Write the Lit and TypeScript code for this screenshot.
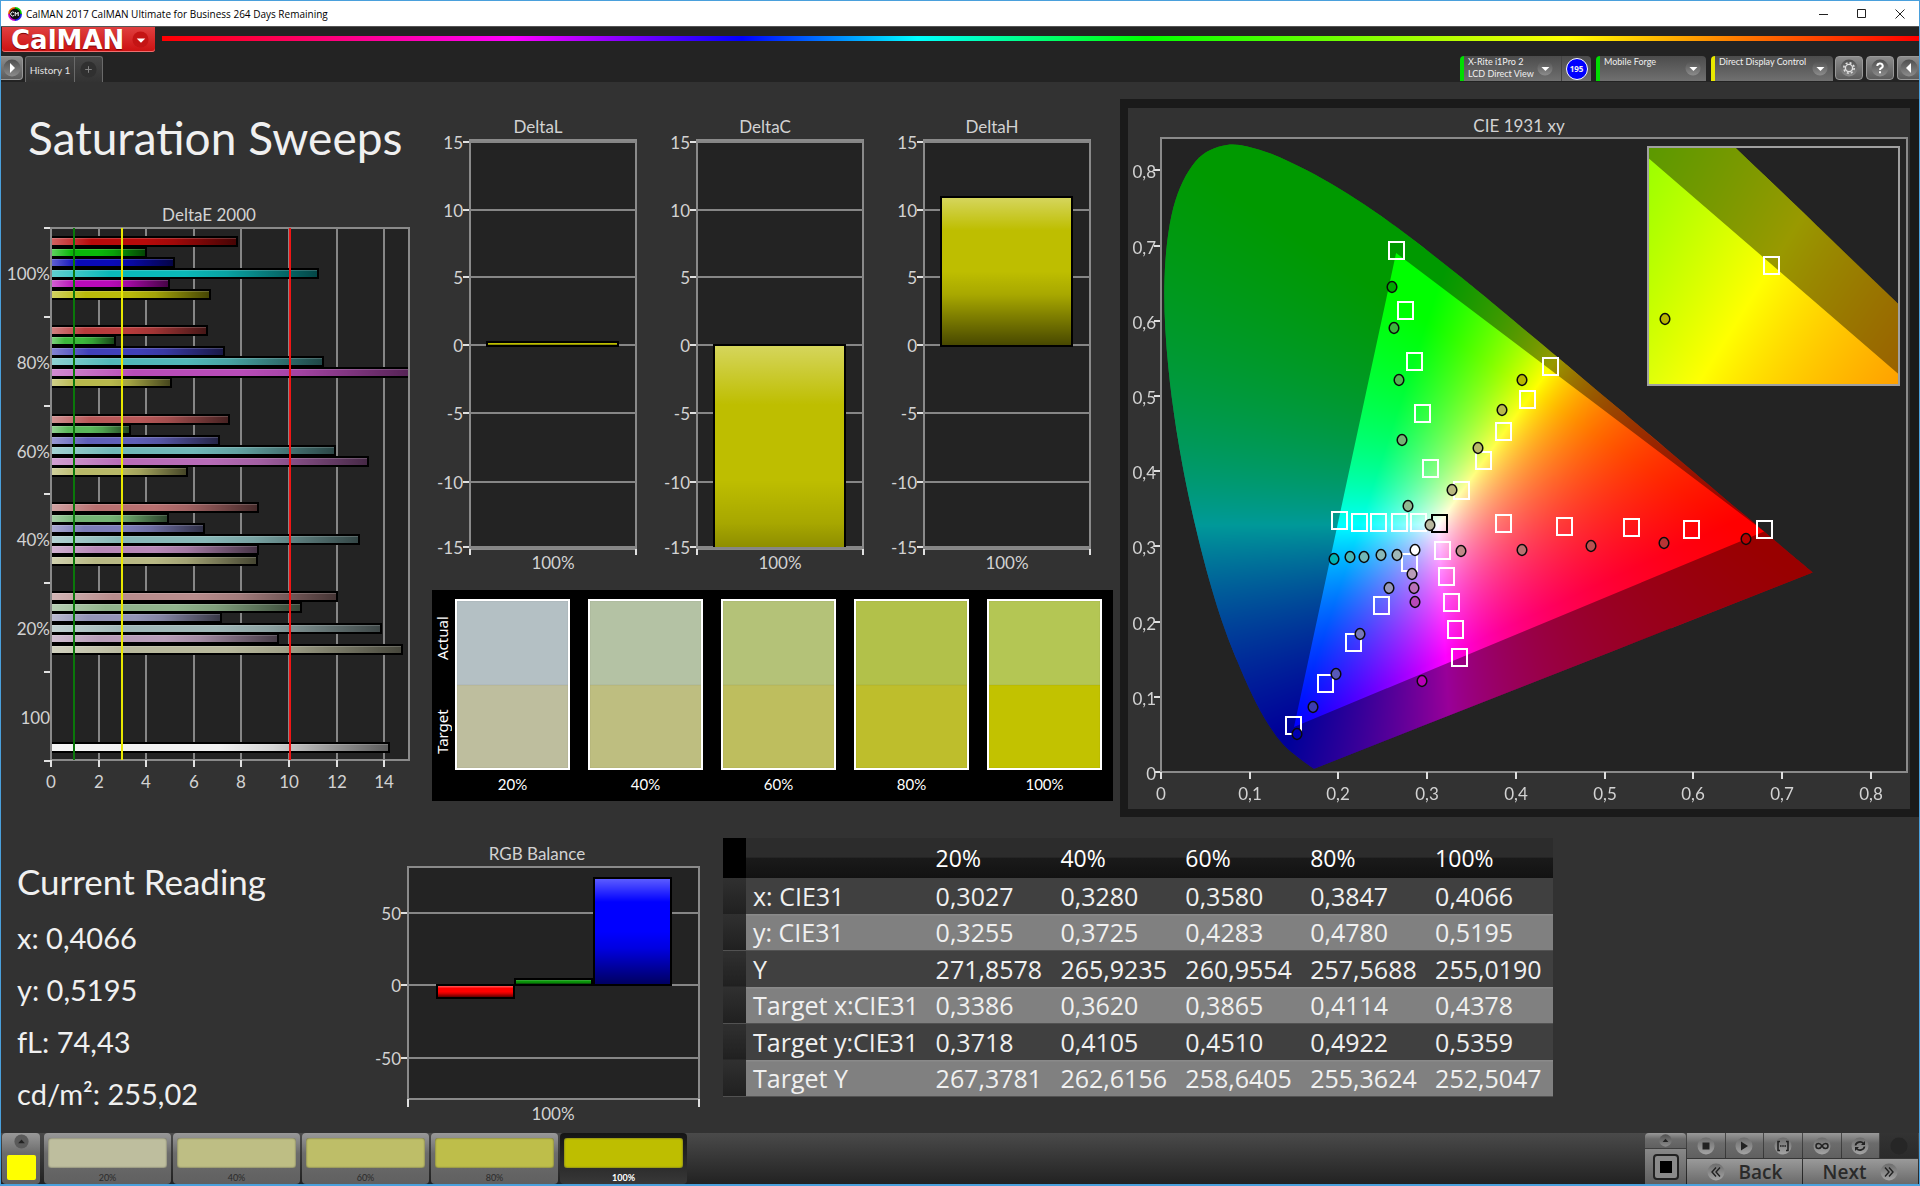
import { LitElement, html, svg, css } from "lit";
import { customElement } from "lit/decorators.js";

type Point = [number, number];

const LEVELS = ["20%", "40%", "60%", "80%", "100%"];

/* ---------- DeltaE 2000 data ---------- */
const DELTA_E: { label: string; bars: [number, string][] }[] = [
  { label: "100%", bars: [[7.86, "#b80a0a"], [4.04, "#0ab80a"], [5.23, "#0a0ab8"], [11.27, "#0ab8b8"], [5, "#b80ab8"], [6.72, "#b8b80a"]] },
  { label: "80%", bars: [[6.6, "#b83c3c"], [2.74, "#3cb83c"], [7.32, "#4040b8"], [11.45, "#50b8b8"], [16, "#b84cb8"], [5.08, "#b8b84c"]] },
  { label: "60%", bars: [[7.5, "#b85858"], [3.37, "#5ab85a"], [7.1, "#6060b8"], [11.98, "#70b8b8"], [13.37, "#b86cb8"], [5.75, "#b8b868"]] },
  { label: "40%", bars: [[8.75, "#b87070"], [4.94, "#74b474"], [6.46, "#7c7cb8"], [12.99, "#88b8b8"], [8.75, "#b888b8"], [8.7, "#b8b884"]] },
  { label: "20%", bars: [[12.05, "#b88c8c"], [10.55, "#90b48c"], [7.18, "#9494b8"], [13.9, "#a0b8b8"], [9.56, "#b89cb8"], [14.8, "#b8b89c"]] },
];

/* ---------- chromaticity data ---------- */
const LOCUS: Point[] = [
  [0.1741, 0.005], [0.1714, 0.0051], [0.1644, 0.0109], [0.1566, 0.0177], [0.144, 0.0297], [0.1355, 0.0399],
  [0.1241, 0.0578], [0.1096, 0.0868], [0.0913, 0.1327], [0.0687, 0.2007], [0.0454, 0.295], [0.0235, 0.4127],
  [0.0082, 0.5384], [0.0039, 0.6548], [0.0139, 0.7502], [0.0389, 0.812], [0.0743, 0.8338], [0.1142, 0.8262],
  [0.1547, 0.8059], [0.1929, 0.7816], [0.2296, 0.7543], [0.2658, 0.7243], [0.3016, 0.6923], [0.3373, 0.6589],
  [0.3731, 0.6245], [0.4441, 0.5547], [0.5125, 0.4866], [0.5752, 0.4242], [0.627, 0.3725], [0.6658, 0.334],
  [0.6915, 0.3083], [0.719, 0.2809], [0.7347, 0.2653],
];
const GAMUT: Point[] = [[0.68, 0.32], [0.265, 0.69], [0.15, 0.06]];

const TARGETS: Point[] = [
  [1396, 250], [1405, 310], [1414, 361], [1422, 413], [1430, 468],
  [1550, 366], [1527, 399], [1503, 431], [1483, 460], [1461, 490],
  [1339, 520], [1359, 522], [1378, 522], [1399, 522], [1418, 522],
  [1503, 523], [1564, 526], [1631, 527], [1691, 529], [1764, 529],
  [1442, 550], [1446, 576], [1451, 602], [1455, 629], [1459, 657],
  [1409, 562], [1381, 605], [1353, 642], [1325, 683], [1293, 725],
];
const READINGS: [number, number, string][] = [
  [1392, 287, "#00a800"], [1394, 328, "#3cb43c"], [1399, 380, "#54b454"], [1402, 440, "#74b474"], [1408, 506, "#90b890"],
  [1522, 380, "#b8b800"], [1502, 410, "#b8b84c"], [1478, 448, "#b8b868"], [1452, 490, "#b8b880"], [1430, 525, "#b8b8a0"],
  [1334, 559, "#00b4b4"], [1350, 557, "#48b8b8"], [1364, 557, "#70b8b8"], [1381, 555, "#88b8b8"], [1397, 555, "#a0b8b8"],
  [1415, 550, "#ffffff"],
  [1461, 551, "#c08888"], [1522, 550, "#b87070"], [1591, 546, "#b85050"], [1664, 543, "#b83434"], [1746, 539, "#b80000"],
  [1412, 574, "#b89cb8"], [1414, 588, "#b870b8"], [1415, 602, "#b848b8"], [1422, 681, "#b800b8"],
  [1389, 588, "#9898b8"], [1360, 634, "#7878b8"], [1336, 674, "#5858b8"], [1313, 707, "#3c3cb0"], [1297, 734, "#0000b0"],
];

interface Plane { x0: number; y0: number; sx: number; sy: number; left: number; top: number; w: number; h: number }
/* x0/y0: drawing position of chromaticity (0, 0); sx/sy: units per 1.0 */
const MAIN: Plane = { x0: 1161, y0: 772, sx: 887, sy: 752, left: 1161, top: 138, w: 746, h: 634 };
const DETAIL: Plane = { x0: 1772 - 0.4378 * 3400, y0: 265 + 0.5359 * 3293, sx: 3400, sy: 3293, left: 1648, top: 147, w: 251, h: 238 };

const project = (p: Plane, [x, y]: Point): Point => [p.x0 + x * p.sx, p.y0 - y * p.sy];
const fmt = (n: number) => n.toFixed(1);

function smoothPath(p: Plane): string {
  const pts = LOCUS.map((c) => project(p, c));
  let d = `M${fmt(pts[0][0])} ${fmt(pts[0][1])}`;
  for (let i = 0; i < pts.length - 1; i++) {
    const a = pts[Math.max(0, i - 1)], b = pts[i], c = pts[i + 1], e = pts[Math.min(pts.length - 1, i + 2)];
    d += `C${fmt(b[0] + (c[0] - a[0]) / 6)} ${fmt(b[1] + (c[1] - a[1]) / 6)} ${fmt(c[0] - (e[0] - b[0]) / 6)} ${fmt(c[1] - (e[1] - b[1]) / 6)} ${fmt(c[0])} ${fmt(c[1])}`;
  }
  return d + "Z";
}
const trianglePath = (p: Plane) =>
  "M" + GAMUT.map((c) => project(p, c).map(fmt).join(" ")).join("L") + "Z";

/* Fills a canvas with the brightest sRGB mix of each chromaticity. */
function paintPlane(canvas: HTMLCanvasElement, p: Plane) {
  const ctx = canvas.getContext("2d")!;
  const img = ctx.createImageData(p.w, p.h);
  for (let j = 0; j < p.h; j++) {
    for (let i = 0; i < p.w; i++) {
      const x = (p.left + i + 0.5 - p.x0) / p.sx;
      const y = (p.y0 - (p.top + j + 0.5)) / p.sy;
      const z = 1 - x - y;
      const r = Math.max(0, 3.2406 * x - 1.5372 * y - 0.4986 * z);
      const g = Math.max(0, -0.9689 * x + 1.8758 * y + 0.0415 * z);
      const b = Math.max(0, 0.0557 * x - 0.204 * y + 1.057 * z);
      const m = Math.max(r, g, b, 0.0001);
      const k = (j * p.w + i) * 4;
      img.data[k] = (255 * r) / m;
      img.data[k + 1] = (255 * g) / m;
      img.data[k + 2] = (255 * b) / m;
      img.data[k + 3] = 255;
    }
  }
  ctx.putImageData(img, 0, 0);
}

const chartStyles = css`
  :host { display: block; }
  svg { display: block; width: 100%; height: auto; }
  text { font-family: Lato, "Liberation Sans", sans-serif; font-size: 17px; fill: #d2d2d2; }
  .plot { fill: #232323; stroke: #8a8a8a; stroke-width: 2; }
  .frame { fill: none; }
  .grid { stroke: #868686; stroke-width: 2; fill: none; }
  .tick { stroke: #e0e0e0; stroke-width: 2; fill: none; }
  .end { text-anchor: end; }
  .mid { text-anchor: middle; }
  .bar { stroke: #000; stroke-width: 2; }
`;

const barShade = (vertical: boolean) => svg`
  <linearGradient id="shade" x1="0" y1="0" x2=${vertical ? 0 : 1} y2=${vertical ? 1 : 0}>
    <stop offset="0" stop-color="#fff" stop-opacity=".36"></stop>
    <stop offset=".22" stop-color="#fff" stop-opacity="0"></stop>
    <stop offset=".5" stop-color="#000" stop-opacity="0"></stop>
    <stop offset=".66" stop-color="#000" stop-opacity=".12"></stop>
    <stop offset="1" stop-color="#000" stop-opacity=".62"></stop>
  </linearGradient>`;

@customElement("delta-e-chart")
export class DeltaEChart extends LitElement {
  static styles = chartStyles;
  render() {
    const x0 = 51, unit = 23.8, top = 228, step = 88.75, bottom = 760;
    const bar = (y: number, v: number, c: string) => svg`
      <rect class="bar" x=${x0 - 2} y=${y - 4} width=${Math.round(v * unit) + 1} height="9" fill=${c}></rect>
      <rect x=${x0} y=${y - 3} width=${Math.round(v * unit) - 2} height="7" fill="url(#shade)"></rect>
      <rect x=${x0} y=${y - 3} width=${Math.round(v * unit) - 2} height="1" fill="#fff" opacity=".18"></rect>`;
    return html`<svg viewBox="1 200 419 618" role="img" aria-label="DeltaE 2000">
      <defs>${barShade(false)}<clipPath id="area"><rect x="52" y="228" width="356" height="531"></rect></clipPath></defs>
      <text class="mid" x="209" y="221">DeltaE 2000</text>
      <rect class="plot" x="51" y="228" width="358" height="532"></rect>
      ${[2, 4, 6, 8, 10, 12, 14].map((v) => svg`<path class="grid" d="M${Math.round(x0 + v * unit)} 228V760"></path>`)}
      <g clip-path="url(#area)">
        ${DELTA_E.map((g, i) => g.bars.map(([v, c], k) => bar(Math.round(top + step * i + 13 + 10.5 * k), v, c)))}
        ${bar(747, 14.23, "#f0f0f0")}
      </g>
      <path d="M74 228V760" stroke="#0a780a" stroke-width="2"></path>
      <path d="M122 228V760" stroke="#e8e800" stroke-width="2"></path>
      <path d="M290 228V760" stroke="#f01414" stroke-width="2"></path>
      ${[0, 1, 2, 3, 4, 5, 6].map((i) => svg`<path class="tick" d="M44 ${Math.round(top + step * i)}h6"></path>`)}
      ${[0, 2, 4, 6, 8, 10, 12, 14].map((v) => svg`
        <path class="tick" d="M${Math.round(x0 + v * unit)} ${bottom}v7"></path>
        <text class="mid" x=${Math.round(x0 + v * unit)} y="788">${v}</text>`)}
      ${[...DELTA_E.map((g) => g.label), "100"].map((l, i) => svg`<text class="end" x="50" y=${Math.round(top + step * i + 52)}>${l}</text>`)}
    </svg>`;
  }
}

@customElement("delta-lch-chart")
export class DeltaLchChart extends LitElement {
  static styles = chartStyles;
  render() {
    const charts = [
      { name: "DeltaL", x: 470, y: 342, h: 4 },
      { name: "DeltaC", x: 697, y: 345, h: 270 },
      { name: "DeltaH", x: 924, y: 197, h: 149 },
    ];
    const lines: Point[] = [[15, 142], [10, 210], [5, 277], [0, 345], [-5, 413], [-10, 482], [-15, 547]];
    return html`<svg viewBox="420 100 700 490" role="img" aria-label="DeltaL, DeltaC and DeltaH">
      <defs>${barShade(true)}<clipPath id="area"><rect x="420" y="100" width="700" height="448"></rect></clipPath></defs>
      ${charts.map((c) => svg`
        <text class="mid" x=${c.x + 68} y="133">${c.name}</text>
        <rect class="plot" x=${c.x} y="140" width="166" height="409"></rect>
        ${lines.map(([v, y]) => svg`<path class="grid" d="M${c.x} ${y}h166"></path>
            <path class="tick" d="M${c.x - 7} ${y}h6"></path>
            <text class="end" x=${c.x - 7} y=${y + 7}>${v}</text>`)}
        <g clip-path="url(#area)">
          <rect class="bar" x=${c.x + 17} y=${c.y} width="131" height=${c.h} fill="#bebe00"></rect>
          <rect x=${c.x + 18} y=${c.y + 1} width="129" height=${c.h - 2} fill="url(#shade)"></rect>
        </g>
        <path class="grid" d="M${c.x} 548h166"></path>
        <path class="tick" d="M${c.x} 549v6M${c.x + 166} 549v6"></path>
        <text class="mid" x=${c.x + 83} y="569">100%</text>`)}
    </svg>`;
  }
}

@customElement("rgb-balance-chart")
export class RgbBalanceChart extends LitElement {
  static styles = chartStyles;
  render() {
    const bars: [number, number, number, string][] = [
      [437, 985, 13, "#ff0000"], [515, 979, 6, "#0a960a"], [594, 878, 107, "#0000ff"],
    ];
    const lines: Point[] = [[50, 913], [0, 985], [-50, 1058]];
    return html`<svg viewBox="370 819 353 313" role="img" aria-label="RGB Balance">
      <defs>${barShade(true)}</defs>
      <text class="mid" x="537" y="860">RGB Balance</text>
      <rect class="plot" x="408" y="867" width="291" height="232"></rect>
      ${lines.map(([v, y]) => svg`
        <path class="grid" d="M408 ${y}h291"></path>
        <path class="tick" d="M401 ${y}h6"></path>
        <text class="end" x="401" y=${y + 7}>${v}</text>`)}
      ${bars.map(([x, y, h, c]) => svg`
        <rect class="bar" x=${x} y=${y} width="77" height=${h} fill=${c}></rect>
        <rect x=${x + 1} y=${y + 1} width="75" height=${h - 2} fill="url(#shade)"></rect>`)}
      <path class="tick" d="M408 1099v8M699 1099v8"></path>
      <text class="mid" x="553" y="1120">100%</text>
    </svg>`;
  }
}

@customElement("cie-chart")
export class CieChart extends LitElement {
  static styles = [chartStyles, css`
    canvas { display: block; }
    .target { fill: none; stroke: #fff; stroke-width: 2; }
    .white { stroke: #000; }
    .reading { stroke: #0a0a0a; stroke-width: 1.5; }
    .dim { fill: #000; fill-opacity: .4; fill-rule: evenodd; }
    .inset { stroke: #a0a0a0; }
  `];
  firstUpdated() {
    const [main, detail] = Array.from(this.renderRoot.querySelectorAll("canvas"));
    paintPlane(main, MAIN);
    paintPlane(detail, DETAIL);
  }
  private plane(p: Plane, id: string) {
    const locus = smoothPath(p);
    return svg`
      <defs>
        <clipPath id=${id}><path d=${locus}></path></clipPath>
        <clipPath id=${id + "-box"}><rect x=${p.left} y=${p.top} width=${p.w} height=${p.h}></rect></clipPath>
      </defs>
      <g clip-path="url(#${id}-box)">
        <g clip-path="url(#${id})">
          <foreignObject x=${p.left} y=${p.top} width=${p.w} height=${p.h}>
            <canvas width=${p.w} height=${p.h}></canvas>
          </foreignObject>
        </g>
        <path class="dim" d=${locus + trianglePath(p)}></path>
      </g>`;
  }
  render() {
    const square = (x: number, y: number, extra = "") =>
      svg`<rect class="target ${extra}" x=${x - 7} y=${y - 8} width="15" height="17"></rect>`;
    const dot = (x: number, y: number, c: string) =>
      svg`<ellipse class="reading" cx=${x} cy=${y} rx="4.8" ry="5.4" fill=${c}></ellipse>`;
    return html`<svg viewBox="1128 108 782 701" role="img" aria-label="CIE 1931 xy">
      <text class="mid" x="1519" y="132">CIE 1931 xy</text>
      <rect class="plot" x="1161" y="138" width="746" height="634"></rect>
      ${this.plane(MAIN, "main")}
      <rect class="plot frame" x="1161" y="138" width="746" height="634"></rect>
      ${[0, 1, 2, 3, 4, 5, 6, 7, 8].map((v) => {
        const x = Math.round(1161 + v * 88.7), y = Math.round(772 - v * 75.2), label = v ? `0,${v}` : "0";
        return svg`<path class="tick" d="M${x} 772v7M1154 ${y}h6"></path>
          <text class="mid" x=${x} y="800">${label}</text>
          <text class="end" x="1156" y=${y + 8}>${label}</text>`;
      })}
      ${TARGETS.map(([x, y]) => square(x, y))}
      ${square(1439, 523, "white")}
      ${READINGS.map(([x, y, c]) => dot(x, y, c))}
      <rect class="plot" x="1648" y="147" width="251" height="238"></rect>
      ${this.plane(DETAIL, "detail")}
      <rect class="plot frame inset" x="1648" y="147" width="251" height="238"></rect>
      ${square(1771, 265)}
      ${dot(1665, 319, "#b8b800")}
    </svg>`;
  }
}

@customElement("swatch-panel")
export class SwatchPanel extends LitElement {
  static styles = css`
    :host { display: flex; background: #000; color: #fff; padding: 9px 11px 7px 0; box-sizing: border-box; font: 15px/20px Lato, "Liberation Sans", sans-serif; }
    .side { flex: none; width: 23px; display: grid; grid-template-rows: 78px 78px; row-gap: 16px; align-content: start; }
    .side span { writing-mode: vertical-rl; transform: rotate(180deg); text-align: center; font: 15px/20px "Noto Sans", sans-serif; }
    .items { flex: 1; display: grid; grid-template-columns: repeat(5, minmax(0, 1fr)); gap: 18px; }
    .item { text-align: center; }
    .pair { display: grid; grid-template-rows: 1fr 1fr; height: 171px; box-sizing: border-box; border: 2px solid #fff; margin-bottom: 4px; }
    .pair div { box-shadow: inset 0 0 1px rgba(0, 0, 0, .3); }
  `;
  render() {
    const pairs = [["#b4c0c4", "#bebe9e"], ["#b4c2a4", "#bebe80"], ["#b4c278", "#bebe5e"], ["#b2c14a", "#bebe2c"], ["#b4c654", "#c2c200"]];
    return html`
      <div class="side"><span>Actual</span><span>Target</span></div>
      <div class="items">${pairs.map(([a, t], i) => html`<div class="item">
        <div class="pair"><div style="background:${a}"></div><div style="background:${t}"></div></div>
        ${LEVELS[i]}
      </div>`)}</div>`;
  }
}

@customElement("readings-table")
export class ReadingsTable extends LitElement {
  static styles = css`
    :host { display: block; }
    table { width: 100%; height: 259px; border-collapse: collapse; table-layout: fixed; color: #f0f0f0; font: 25px/30px "Open Sans", "Noto Sans", sans-serif; }
    th, td { padding: 0 0 0 7px; font-weight: 400; text-align: left; white-space: nowrap; box-sizing: border-box; }
    .lead { width: 23px; }
    .name { width: 22%; }
    thead tr { height: 40px; }
    thead th, thead td { background: linear-gradient(#2c2c2c, #2c2c2c 48%, #1a1a1a 50%, #121212); font-size: 23px; color: #fff; }
    thead .lead { background: #000; }
    tbody tr { background: #404040; }
    tbody tr:nth-child(even) { background: linear-gradient(#8a8a8a 0 1px, #808080 2px); border-bottom: 1px solid #525252; }
    tbody .lead { background: linear-gradient(#303030, #202020); }
  `;
  render() {
    const rows = [
      ["x: CIE31", "0,3027", "0,3280", "0,3580", "0,3847", "0,4066"],
      ["y: CIE31", "0,3255", "0,3725", "0,4283", "0,4780", "0,5195"],
      ["Y", "271,8578", "265,9235", "260,9554", "257,5688", "255,0190"],
      ["Target x:CIE31", "0,3386", "0,3620", "0,3865", "0,4114", "0,4378"],
      ["Target y:CIE31", "0,3718", "0,4105", "0,4510", "0,4922", "0,5359"],
      ["Target Y", "267,3781", "262,6156", "258,6405", "255,3624", "252,5047"],
    ];
    return html`<table>
      <thead><tr><td class="lead"></td><td class="name"></td>${LEVELS.map((l) => html`<th scope="col">${l}</th>`)}</tr></thead>
      <tbody>${rows.map(([n, ...v]) => html`<tr><td class="lead"></td><th scope="row">${n}</th>${v.map((c) => html`<td>${c}</td>`)}</tr>`)}</tbody>
    </table>`;
  }
}

const buttonBase = css`
  button { font: inherit; color: inherit; margin: 0; padding: 0; border: 0; background: none; }
  svg { display: block; flex: none; }
`;
const knob = (glyph: unknown, size = 18, fill = "url(#k)") => html`<svg width=${size} height=${size} viewBox="0 0 18 18" aria-hidden="true">
  <defs><linearGradient id="k" x1="0" y1="0" x2="0" y2="1"><stop offset="0" stop-color="#505050"></stop><stop offset="1" stop-color="#8c8c8c"></stop></linearGradient>
  <linearGradient id="light" x1="0" y1="0" x2="0" y2="1"><stop offset="0" stop-color="#6c6c6c"></stop><stop offset="1" stop-color="#a4a4a4"></stop></linearGradient></defs>
  <circle cx="9" cy="9" r="8.5" fill=${fill}></circle>${glyph}</svg>`;

@customElement("app-header")
export class AppHeader extends LitElement {
  static styles = [buttonBase, css`
    :host { display: block; background: #232323; font-family: Lato, "Liberation Sans", sans-serif; }
    .title { display: flex; align-items: center; height: 25px; background: #fff; color: #000; font: 10px/24px "Open Sans", "Noto Sans", sans-serif; padding-left: 7px; }
    .title span { flex: 1; padding-left: 4px; }
    .title button { width: 38px; height: 24px; display: grid; place-items: center; }
    .brand { display: flex; align-items: center; height: 26px; border-top: 1px solid #555; box-sizing: border-box; padding-left: 1px; gap: 7px; }
    .logo { width: 153px; height: 25px; display: flex; align-items: center; justify-content: space-between; padding: 0 6px 0 9px; box-sizing: border-box; background: linear-gradient(#e04040, #cc1010); color: #fff; font: bold 26px/24px "DejaVu Sans", sans-serif; border-radius: 0 0 3px 3px; box-shadow: inset 0 -1px #ee7070; text-shadow: 0 1px 1px #700; }
    .rainbow { flex: 1; height: 5px; margin-bottom: 2px; background: linear-gradient(90deg, #f00, #f0f 20%, #00f 33%, #0ff 43%, #0f0 56%, #6f0 66%, #ff0 80%, #f70 90%, #f00); }
    .bar { display: flex; align-items: flex-end; height: 30px; }
    .round { width: 28px; height: 24px; display: grid; place-items: center; background: linear-gradient(#8c8c8c, #5c5c5c); border: 1px solid #999; border-radius: 4px; box-sizing: border-box; margin-bottom: 2px; }
    .open { width: 22px; margin-right: 2px; border-radius: 0 4px 4px 0; border-left: 0; }
    .edge { width: 23px; border-radius: 4px 0 0 4px; border-right: 0; }
    .tab { height: 26px; background: linear-gradient(#464646, #333); border: 1px solid #6a6a6a; border-bottom: 0; box-sizing: border-box; color: #e2e2e2; }
    .history { width: 50px; font-size: 10px; border-radius: 3px 0 0 0; white-space: nowrap; }
    .plus { width: 28px; border-left: 0; border-radius: 0 3px 0 0; display: grid; place-items: center; }
    .space { flex: 1; }
    .device { display: flex; height: 25px; margin: 0 5px 1px 0; border-left: 4px solid #0d0; border-radius: 4px 4px 0 0; background: linear-gradient(#4c4c4c, #707070); color: #f0f0f0; font-size: 9px; line-height: 12px; text-align: left; align-items: flex-start; box-sizing: border-box; }
    .device.yellow { border-color: #e8e800; margin-right: 2px; }
    .device .name { flex: 1; min-width: 0; padding: 0 0 0 4px; white-space: nowrap; }
    .device svg { margin-top: 4px; }
    .meter { width: 131px; }
    .source { width: 110px; }
    .display { width: 122px; }
    .source svg, .display svg { margin-right: 5px; }
    .count { width: 30px; height: 25px; margin-left: 8px; border-left: 1px solid #444; display: grid; place-items: center; box-sizing: border-box; }
    .count b { width: 20px; height: 20px; border: 1px solid #fff; border-radius: 50%; background: #00f; font: bold 8px/20px "Open Sans", sans-serif; text-align: center; }
    .tools { display: flex; gap: 3px; }
    .tools .edge { width: 22px; }
  `];
  render() {
    const down = svg`<path d="M5 8h9l-4.500 4.500z" fill="#fff"></path>`;
    return html`
      <div class="title">
        <svg width="14" height="14" viewBox="0 0 14 14" aria-hidden="true">
          <path d="M7 0a7 7 0 0 1 7 7H7z" fill="#0c0"></path><path d="M14 7a7 7 0 0 1-7 7V7z" fill="#22e"></path>
          <path d="M7 14a7 7 0 0 1-7-7h7z" fill="#c0c"></path><path d="M0 7a7 7 0 0 1 7-7v7z" fill="#e60"></path>
          <circle cx="7" cy="7" r="5.400" fill="#111"></circle>
          <path d="M6 5.500a2 2 0 1 0 0 3M7.200 9V5.200l1.400 2 1.600-2V9" fill="none" stroke="#fff"></path>
        </svg>
        <span>CalMAN 2017 CalMAN Ultimate for Business 264 Days Remaining</span>
        <button aria-label="Minimize"><svg width="10" height="10"><path d="M0 5.500h9" stroke="#222"></path></svg></button>
        <button aria-label="Maximize"><svg width="10" height="10"><path d="M.5.5h8v8h-8z" fill="none" stroke="#222"></path></svg></button>
        <button aria-label="Close"><svg width="10" height="10"><path d="M.5.5l9 9M9.500.5l-9 9" stroke="#222"></path></svg></button>
      </div>
      <div class="brand">
        <button class="logo">CalMAN ${knob(down, 17, "#c41414")}</button>
        <div class="rainbow"></div>
      </div>
      <div class="bar">
        <button class="round open" aria-label="Open panel">${knob(svg`<path d="M7 4v10l5-5z" fill="#fff"></path>`, 18)}</button>
        <button class="tab history">History 1</button>
        <button class="tab plus" aria-label="Add history">${knob(svg`<path d="M9 5.500v7M5.500 9h7" stroke="#888"></path>`, 17, "#303030")}</button>
        <div class="space"></div>
        <button class="device meter"><span class="name">X-Rite i1Pro 2<br>LCD Direct View</span>${knob(down, 16)}<span class="count"><b>195</b></span></button>
        <button class="device source"><span class="name">Mobile Forge</span>${knob(down, 16)}</button>
        <button class="device yellow display"><span class="name">Direct Display Control</span>${knob(down, 16)}</button>
        <div class="tools">
          <button class="round" aria-label="Settings">${knob(svg`<circle cx="9" cy="9" r="3.600" fill="none" stroke="#e0e0e0" stroke-width="1.400"></circle><circle cx="9" cy="9" r="5.200" fill="none" stroke="#e0e0e0" stroke-width="1.600" stroke-dasharray="2 2.080"></circle>`)}</button>
          <button class="round" aria-label="Help">${knob(svg`<path d="M6.300 7a2.700 2.500 0 1 1 3.900 2.200Q9 9.800 9 11M9 12.200v2" fill="none" stroke="#fff" stroke-width="2"></path>`)}</button>
          <button class="round edge" aria-label="Collapse">${knob(svg`<path d="M11 4v10L6 9z" fill="#fff"></path>`)}</button>
        </div>
      </div>`;
  }
}

@customElement("app-footer")
export class AppFooter extends LitElement {
  static styles = [buttonBase, css`
    :host { display: flex; height: 51px; background: linear-gradient(#4a4a4a, #222); padding: 0 1px; box-sizing: border-box; color: #2a2a2a; }
    button { background: linear-gradient(#999, #6c6c6c 40%, #606060); }
    .current { width: 38px; display: flex; flex-direction: column; align-items: center; justify-content: space-between; padding: 1px 0 4px; box-sizing: border-box; border-radius: 4px; margin-right: 4px; }
    .current i { width: 29px; height: 25px; background: #ff0; border-radius: 2px; }
    .level { width: 127px; margin-right: 2px; padding: 5px 4px 0; box-sizing: border-box; border-radius: 4px; font: 9px/13px Lato, "Liberation Sans", sans-serif; display: flex; flex-direction: column; gap: 3px; }
    .level i { height: 30px; border-radius: 3px; box-shadow: inset 0 0 2px #444; display: block; }
    .level.on { background: linear-gradient(#151515, #383838); color: #fff; font-weight: 700; }
    .space { flex: 1; }
    .stop { width: 41px; display: grid; grid-template-rows: 15px 35px; margin-right: 1px; gap: 1px; }
    .stop button { display: grid; place-items: center; }
    .stop button:first-child { border-radius: 4px 4px 0 0; }
    .stop button:last-child { background: linear-gradient(#888, #606060); }
    .nav { width: 231px; display: grid; grid-template-columns: repeat(6, minmax(0, 1fr)); grid-template-rows: 25px 25px; gap: 1px; }
    .nav button { display: grid; place-items: center; }
    .nav button.off { background: linear-gradient(#333, #2a2a2a); }
    .nav button.wide { grid-column: span 3; display: flex; align-items: center; justify-content: center; gap: 14px; font: 600 19px/24px "Open Sans", "Noto Sans", sans-serif; background: linear-gradient(#9a9a9a, #6a6a6a); }
  `];
  render() {
    const colors = ["#bebe9e", "#bebe84", "#bebe68", "#bebe4a", "#bebe00"];
    const light = "url(#light)";
    const up = svg`<path d="M5 11h8L9 6.500z" fill="#222"></path>`;
    const tools: [string, unknown][] = [
      ["Stop", svg`<path d="M5.500 5.500h7v7h-7z" fill="#222"></path>`],
      ["Play", svg`<path d="M6 4.500v9l7-4.500z" fill="#222"></path>`],
      ["Read range", svg`<path d="M6 4.500H4v9h2M12 4.500h2v9h-2" fill="none" stroke="#222" stroke-width="1.600"></path><path d="M6 8.200h1.600v1.600H6zM8.200 8.200h1.600v1.600H8.200zM10.400 8.200H12v1.600h-1.600z" fill="#222"></path>`],
      ["Continuous", svg`<path d="M9 9C7.500 6.500 6.500 6.500 5.500 6.500a2.500 2.500 0 0 0 0 5C6.500 11.500 7.500 11.500 9 9s2.500-2.500 3.500-2.500a2.500 2.500 0 0 1 0 5C11.500 11.500 10.500 11.500 9 9z" fill="none" stroke="#222" stroke-width="1.500"></path>`],
      ["Refresh", svg`<path d="M4.500 8.500A4.500 4 0 0 1 12.500 6.500M13.500 9.500A4.500 4 0 0 1 5.500 11.500" fill="none" stroke="#222" stroke-width="1.700"></path><path d="M14 4v4h-4zM4 14v-4h4z" fill="#222"></path>`],
    ];
    return html`
      <button class="current" aria-label="Current color">${knob(up, 15, "#5a5a5a")}<i></i></button>
      ${LEVELS.map((l, i) => html`<button class="level ${i === 4 ? "on" : ""}"><i style="background:${colors[i]}"></i>${l}</button>`)}
      <div class="space"></div>
      <div class="stop">
        <button aria-label="More">${knob(up, 13)}</button>
        <button aria-label="Stop sequence"><svg width="28" height="28" viewBox="0 0 28 28"><rect x="2" y="2" width="24" height="24" rx="3" fill="#8a8a8a" stroke="#222" stroke-width="2"></rect><path d="M8 8h12v12H8z" fill="#000"></path></svg></button>
      </div>
      <div class="nav">
        ${tools.map(([n, g]) => html`<button aria-label=${n}>${knob(g, 18, light)}</button>`)}
        <button class="off" disabled aria-label="Record">${knob("", 18, "#262626")}</button>
        <button class="wide">${knob(svg`<path d="M9 4.500L5 9l4 4.500M13 4.500L9 9l4 4.500" fill="none" stroke="#222" stroke-width="1.400"></path>`, 18, light)}Back</button>
        <button class="wide">Next${knob(svg`<path d="M5 4.500L9 9l-4 4.500M9 4.500L13 9l-4 4.500" fill="none" stroke="#222" stroke-width="1.400"></path>`, 18, light)}</button>
      </div>`;
  }
}

@customElement("app-root")
export class AppRoot extends LitElement {
  static styles = css`
    :host { display: flex; flex-direction: column; min-height: 100vh; box-sizing: border-box; background: #323232; border: 1px solid #4aa0dc; border-bottom-width: 2px; color: #f0f0f0; font-family: Lato, "Liberation Sans", sans-serif; }
    main { flex: 1; }
    .top { display: grid; grid-template-columns: minmax(0, 419fr) minmax(0, 700fr) minmax(0, 799fr); align-items: start; }
    h1 { margin: 0; padding: 26px 0 0 27px; height: 92px; font-size: 46px; line-height: 60px; font-weight: 400; white-space: nowrap; }
    .center { padding-top: 18px; }
    swatch-panel { margin: 0 7px 0 12px; }
    .cie { margin-top: 17px; background: #1a1a1a; padding: 9px 9px 8px 8px; }
    .cie cie-chart { background: #323232; }
    .bottom { display: grid; grid-template-columns: minmax(0, 369fr) minmax(0, 353fr) minmax(0, 830fr) minmax(0, 366fr); align-items: start; margin-top: 1px; }
    .reading { padding: 39px 0 0 16px; white-space: nowrap; }
    h2 { margin: 0 0 8px; font-size: 35px; line-height: 46px; font-weight: 400; }
    .reading p { margin: 0; font-size: 29px; line-height: 52px; }
    readings-table { margin-top: 19px; }
  `;
  render() {
    return html`
      <app-header></app-header>
      <main>
        <div class="top">
          <section><h1>Saturation Sweeps</h1><delta-e-chart></delta-e-chart></section>
          <section class="center"><delta-lch-chart></delta-lch-chart><swatch-panel></swatch-panel></section>
          <section class="cie"><cie-chart></cie-chart></section>
        </div>
        <div class="bottom">
          <section class="reading">
            <h2>Current Reading</h2>
            <p>x: 0,4066</p><p>y: 0,5195</p><p>fL: 74,43</p><p>cd/m²: 255,02</p>
          </section>
          <rgb-balance-chart></rgb-balance-chart>
          <readings-table></readings-table>
        </div>
      </main>
      <app-footer></app-footer>`;
  }
}
